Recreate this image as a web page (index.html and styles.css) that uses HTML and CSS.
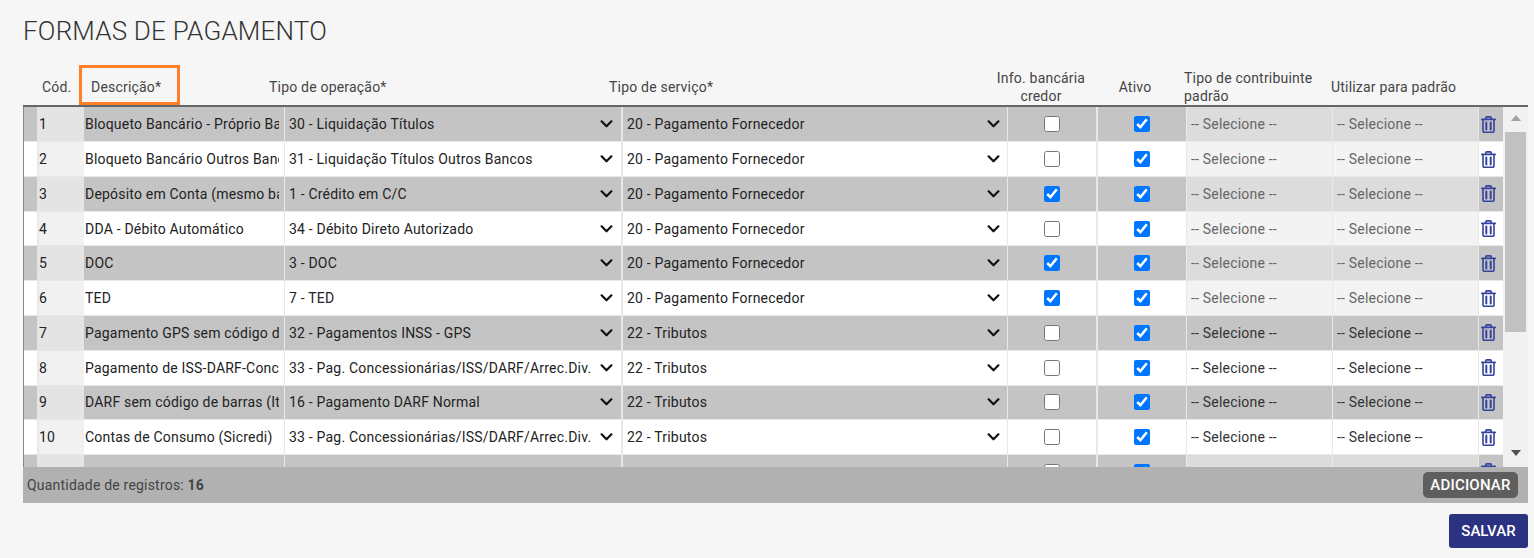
FILE: index.html
```html
<!DOCTYPE html>
<html lang="pt-BR">
<head>
<meta charset="utf-8">
<title>Formas de pagamento</title>
<link rel="stylesheet" href="styles.css">
</head>
<body>
<svg class="defs" width="0" height="0" aria-hidden="true">
  <symbol id="chev" viewBox="0 0 14 9"><path d="M1.500 1.500 7 7l5.500-5.500" fill="none" stroke="currentColor" stroke-width="2.500" stroke-linecap="round" stroke-linejoin="round"/></symbol>
  <symbol id="trash" viewBox="0 0 15 17"><path d="M.8 3.300h13.400M4.800 3V1.900c0-.6.400-1 1-1h3.400c.6 0 1 .4 1 1V3" fill="none" stroke="currentColor" stroke-width="1.700" stroke-linecap="round"/><path d="M2 4v10.800c0 .9.600 1.500 1.500 1.500h8c.9 0 1.500-.6 1.500-1.500V4" fill="none" stroke="currentColor" stroke-width="1.600"/><path d="M5.300 6.500v7M9.700 6.500v7" fill="none" stroke="currentColor" stroke-width="2" stroke-linecap="round"/></symbol>
</svg>
<main class="page">
  <h1 class="title">FORMAS DE PAGAMENTO</h1>
  <div class="head">
    <div class="hc hc-cod">Cód.</div>
    <div class="hc hc-desc"><span class="mark">Descrição*</span></div>
    <div class="hc hc-op">Tipo de operação*</div>
    <div class="hc hc-serv">Tipo de serviço*</div>
    <div class="hc hc-info">Info. bancária<br>credor</div>
    <div class="hc hc-ativo">Ativo</div>
    <div class="hc hc-contrib">Tipo de contribuinte<br>padrão</div>
    <div class="hc hc-padrao">Utilizar para padrão</div>
  </div>
  <div class="scroller">
    <div class="rows" id="rows"></div>
    <div class="scrollbar">
      <span class="arrow arrow-up"></span>
      <span class="thumb"></span>
      <span class="arrow arrow-down"></span>
    </div>
  </div>
  <div class="foot">
    <span class="count">Quantidade de registros: <b>16</b></span>
    <button class="btn-add" type="button">ADICIONAR</button>
  </div>
  <div class="actions"><button class="btn-save" type="button">SALVAR</button></div>
</main>
<script src="app.js"></script>
</body>
</html>
```
FILE: app.js
```js
var data = [
  ["1","Bloqueto Bancário - Próprio Banco","30 - Liquidação Títulos","20 - Pagamento Fornecedor",0,1,1],
  ["2","Bloqueto Bancário Outros Bancos","31 - Liquidação Títulos Outros Bancos","20 - Pagamento Fornecedor",0,1,1],
  ["3","Depósito em Conta (mesmo banco)","1 - Crédito em C/C","20 - Pagamento Fornecedor",1,1,1],
  ["4","DDA - Débito Automático","34 - Débito Direto Autorizado","20 - Pagamento Fornecedor",0,1,1],
  ["5","DOC","3 - DOC","20 - Pagamento Fornecedor",1,1,1],
  ["6","TED","7 - TED","20 - Pagamento Fornecedor",1,1,1],
  ["7","Pagamento GPS sem código de barras","32 - Pagamentos INSS - GPS","22 - Tributos",0,1,0],
  ["8","Pagamento de ISS-DARF-Concessionárias","33 - Pag. Concessionárias/ISS/DARF/Arrec.Div.","22 - Tributos",0,1,0],
  ["9","DARF sem código de barras (Itaú)","16 - Pagamento DARF Normal","22 - Tributos",0,1,0],
  ["10","Contas de Consumo (Sicredi)","33 - Pag. Concessionárias/ISS/DARF/Arrec.Div.","22 - Tributos",0,1,0],
  ["11","Transferência mesmo banco","3 - DOC","20 - Pagamento Fornecedor",0,1,1]
];
function sel(t,c){return '<div class="cell pick '+c+'"><span class="pick-text">'+t+'</span><svg class="chev"><use href="#chev"/></svg></div>';}
function chk(c,k){return '<div class="cell center '+k+'"><input class="check" type="checkbox"'+(c?' checked':'')+'></div>';}
document.getElementById('rows').innerHTML = data.map(function(r,i){
  var ph = '<div class="cell ph'+(r[6]?' off':'')+'"><span>-- Selecione --</span></div>';
  return '<div class="row '+(i%2?'even':'odd')+'">'+
    '<div class="cell blank"></div>'+
    '<div class="cell cod">'+r[0]+'</div>'+
    '<div class="cell desc"><span class="clip">'+r[1]+'</span></div>'+
    sel(r[2],'pick-op')+sel(r[3],'pick-serv')+chk(r[4],'')+chk(r[5],'c-ativo')+ph+ph+
    '<div class="cell del"><svg class="trash"><use href="#trash"/></svg></div>'+
  '</div>';
}).join('');
```
FILE: styles.css
```css
*, *::after { box-sizing: border-box; }
html, body { margin: 0; height: 100%; }
body { background: #f6f6f6; font-family: Roboto, "Liberation Sans", sans-serif; color: #222; overflow: hidden; }
.defs { position: absolute; }
.page { padding: 16px 6px 0 23px; }
.title { margin: 0; font-size: 26px; line-height: 30px; font-weight: 300; color: #333; letter-spacing: .2px; }
.head { display: grid; grid-template-columns: 14px 47px 200px 338px 385px 90px 89px 146px 146px 50px; height: 37px; margin-top: 24px; border-bottom: 2px solid #666; font-size: 14px; line-height: 18px; color: #444; letter-spacing: .2px; align-items: center; }
.hc { position: relative; top: -1px; }
.hc-cod { grid-column: 2; padding-left: 5px; }
.hc-desc { grid-column: 3; padding-left: 7px; }
.mark { display: inline-block; }
.mark::after { content: ""; position: absolute; left: -5px; top: -13px; width: 101px; height: 40px; border: 3px solid #ff7f27; pointer-events: none; }
.hc-op { grid-column: 4; margin-left: -15px; }
.hc-serv { grid-column: 5; margin-left: -13px; }
.hc-info { grid-column: 6; text-align: center; margin: 0 -4px 0 -26px; }
.hc-ativo { grid-column: 7; text-align: center; margin-left: -13px; }
.hc-contrib { grid-column: 8; margin-left: -2px; white-space: nowrap; }
.hc-padrao { grid-column: 9; margin-left: -1px; white-space: nowrap; }
.scroller { display: flex; height: 360px; overflow: hidden; border-left: 1px solid #888; }
.rows { width: 1479px; flex: none; padding-top: .4px; }
.row { display: grid; grid-template-columns: 13px 47px 200px 338px 385px 90px 89px 146px 146px 25px; height: 34.78px; border-bottom: 1.5px solid #e8e8e8; font-size: 14px; letter-spacing: .2px; }
.cell { display: flex; align-items: center; min-width: 0; height: 100%; border-left: 1px solid #e8e8e8; }
.cell.blank { border-left: 0; }
.cell.desc { border-left: 0; padding: 0 5px 0 1px; }
.clip { display: block; overflow: hidden; white-space: nowrap; width: 100%; }
.odd .cell { background: #c4c4c4; }
.even .cell { background: #fff; }
.cell.cod { border-left-width: 2px; }
.odd .cod { background: #e4e4e4; border-left-color: #e4e4e4; }
.even .cod { background: #f1f1f1; }
.pick { padding-left: 4px; justify-content: space-between; }
.pick-op { padding-right: 9px; }
.pick-serv { padding-right: 7px; margin-left: -1px; border-left-width: 2px; }
.pick-text { white-space: nowrap; overflow: hidden; color: #222; }
.chev { width: 13px; height: 8px; color: #111; flex: none; }
.center { justify-content: center; padding-right: 1px; }
.c-ativo { margin-left: -1px; border-left-width: 2px; }
.check { width: 16px; height: 16px; margin: 0; accent-color: #0075ff; }
.ph { padding-left: 4px; color: #333; }
.ph.off { color: #666; }
.odd .ph.off { background: #dcdcdc; }
.even .ph.off { background: #f3f3f3; }
.del { padding-left: 2px; }
.row:last-child .desc, .row:last-child .pick, .row:last-child .ph, .row:last-child .cod { padding-top: 3px; }
.trash { width: 15px; height: 17px; color: #36439c; }
.scrollbar { width: 25px; flex: none; background: #f1f1f1; position: relative; }
.thumb { position: absolute; left: 2px; right: 2px; top: 25px; height: 200px; background: #c1c1c1; }
.arrow { position: absolute; left: 50%; margin-left: -5px; width: 0; height: 0; border-left: 5px solid transparent; border-right: 5px solid transparent; }
.arrow-up { top: 8px; border-bottom: 6px solid #a3a3a3; }
.arrow-down { top: 343px; border-top: 6px solid #505050; }
.foot { display: flex; justify-content: space-between; align-items: center; height: 36px; background: #b1b1b1; padding: 0 10px 0 4px; font-size: 14px; letter-spacing: .2px; color: #444; }
.btn-add { width: 95px; height: 26px; padding: 0; border: 0; border-radius: 5px; background: #5e5e5e; color: #fff; font: 500 15px Roboto, sans-serif; letter-spacing: .2px; }
.actions { display: flex; justify-content: flex-end; margin-top: 11px; }
.btn-save { width: 79px; height: 34px; border: 0; border-radius: 3px; background: #2b3282; color: #fff; font: 500 15px Roboto, sans-serif; }
```
